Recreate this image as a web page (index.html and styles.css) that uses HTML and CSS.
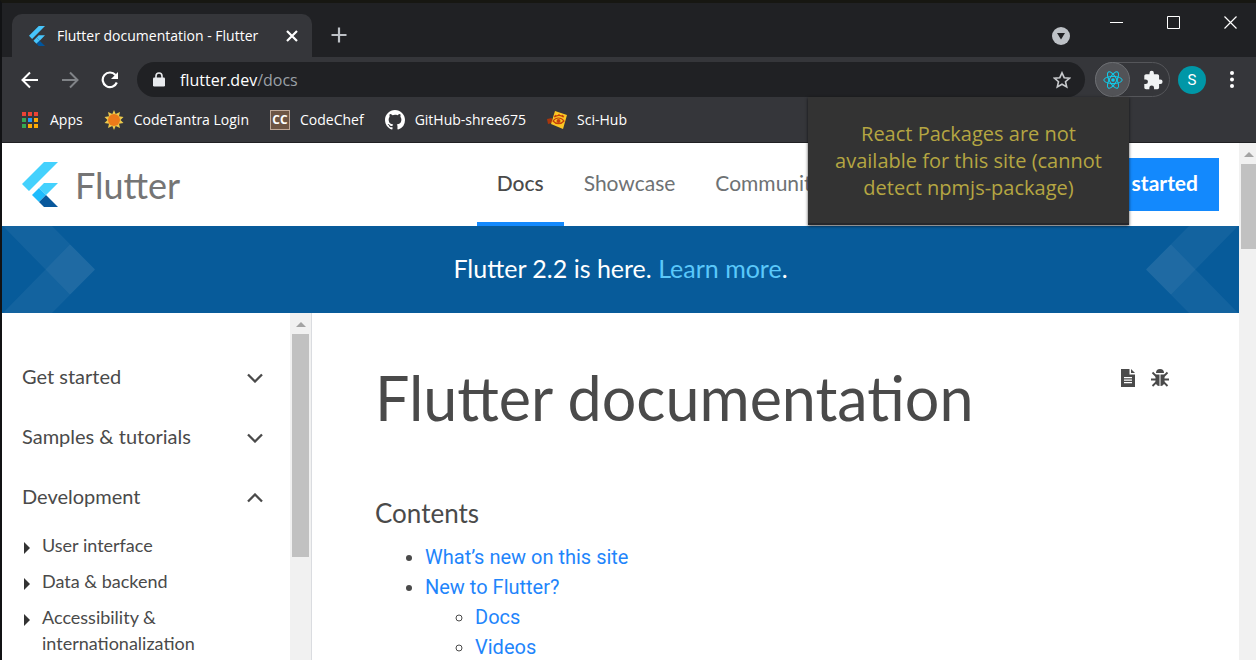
FILE: index.html
```html
<!DOCTYPE html>
<html lang="en">
<head>
<meta charset="utf-8">
<title>Flutter documentation - Flutter</title>
<link rel="stylesheet" href="styles.css">
</head>
<body>
<div class="window">
  <div class="tabstrip">
    <div class="tab">
      <svg class="tab-logo" width="18" height="20" viewBox="0 0 36 45"><path fill="#47c5fb" d="M22 0h14L7 29 0 22zM22 21h14L24 33l-7-7z"/><path fill="#47c5fb" d="M10 33l7-7 7 7-7 7z"/><path fill="#00569e" d="M17 40l7-7 12 12H22z"/></svg>
      <span class="tab-title">Flutter documentation - Flutter</span>
      <button class="plain" aria-label="Close tab"><svg width="12" height="12" viewBox="0 0 12 12"><path d="M1 1l10 10M11 1L1 11" stroke="#fff" stroke-width="2.2"/></svg></button>
    </div>
    <button class="plain new-tab" aria-label="New tab"><svg width="16" height="16" viewBox="0 0 16 16"><path d="M8 .5v15M.5 8h15" stroke="#bdc1c6" stroke-width="2.2"/></svg></button>
    <div class="window-controls">
      <button class="plain tab-search" aria-label="Search tabs"><svg width="18" height="18" viewBox="0 0 18 18"><circle cx="9" cy="9" r="9" fill="#bdc1c6"/><path d="M5 6h8L9 12.500z" fill="#202124"/></svg></button>
      <button class="plain" aria-label="Minimize"><svg width="13" height="13" viewBox="0 0 13 13"><path d="M0 6.500h13" stroke="#fff"/></svg></button>
      <button class="plain" aria-label="Maximize"><svg width="13" height="13" viewBox="0 0 13 13"><path d="M.5.5h12v12H.5z" fill="none" stroke="#fff"/></svg></button>
      <button class="plain" aria-label="Close"><svg width="13" height="13" viewBox="0 0 13 13"><path d="M.5.5l12 12M12.500.5l-12 12" stroke="#fff" stroke-width="1.200"/></svg></button>
    </div>
  </div>

  <div class="toolbar">
    <div class="nav-buttons">
      <button class="plain" aria-label="Back"><svg width="18" height="18" viewBox="0 0 18 18"><path d="M17 9H2M9 1.500L1.500 9 9 16.500" fill="none" stroke="#fff" stroke-width="2"/></svg></button>
      <button class="plain" aria-label="Forward"><svg width="18" height="18" viewBox="0 0 18 18"><path d="M1 9h15M9 1.500L16.500 9 9 16.500" fill="none" stroke="#808387" stroke-width="2"/></svg></button>
      <button class="plain" aria-label="Reload"><svg width="18" height="18" viewBox="0 0 18 18"><path d="M15.800 11.500A7.300 7.300 0 1 1 14.500 4" fill="none" stroke="#fff" stroke-width="2.200"/><path d="M17 1v7h-7z" fill="#fff"/></svg></button>
    </div>
    <div class="omnibox">
      <svg width="12" height="15" viewBox="0 0 12 15"><path d="M3 6V4a3 3 0 0 1 6 0v2" fill="none" stroke="#e8eaed" stroke-width="1.600"/><rect x="0" y="5.500" width="12" height="9" rx="1.300" fill="#e8eaed"/></svg>
      <div class="url">flutter.dev<span class="url-path">/docs</span></div>
      <button class="plain" aria-label="Bookmark this page"><svg width="18" height="18" viewBox="0 0 18 18"><path d="M9 1.800l2.200 4.900 5.300.5-4 3.500 1.200 5.200L9 13.200l-4.700 2.700 1.200-5.200-4-3.500 5.300-.5z" fill="none" stroke="#c8cacd" stroke-width="1.600"/></svg></button>
    </div>
    <div class="extensions">
      <button class="plain react" aria-label="React Packages"><svg width="20" height="20" viewBox="0 0 20 20"><g fill="none" stroke="#10cdec"><ellipse cx="10" cy="10" rx="9.200" ry="3.600"/><ellipse cx="10" cy="10" rx="9.200" ry="3.600" transform="rotate(60 10 10)"/><ellipse cx="10" cy="10" rx="9.200" ry="3.600" transform="rotate(120 10 10)"/></g><circle cx="10" cy="10" r="1.800" fill="#10cdec"/></svg></button>
      <button class="plain puzzle" aria-label="Extensions"><svg width="20" height="20" viewBox="1 0 22 23"><path fill="#f1f3f4" d="M20.500 11H19V7c0-1.100-.9-2-2-2h-4V3.500a2.500 2.500 0 0 0-5 0V5H4c-1.100 0-2 .9-2 2v3.800h1.500a2.700 2.700 0 0 1 0 5.400H2V20c0 1.100.9 2 2 2h3.800v-1.500a2.700 2.700 0 0 1 5.400 0V22H17c1.100 0 2-.9 2-2v-4h1.500a2.500 2.500 0 0 0 0-5z"/></svg></button>
      <div class="popup" role="tooltip">React Packages are not available for this site (cannot detect npmjs-package)</div>
    </div>
    <button class="plain avatar" aria-label="Profile">S</button>
    <button class="plain menu" aria-label="Menu"><svg width="4" height="17" viewBox="0 0 4 17"><g fill="#fff"><circle cx="2" cy="2" r="2"/><circle cx="2" cy="8.500" r="2"/><circle cx="2" cy="15" r="2"/></g></svg></button>
  </div>

  <nav class="bookmarks" aria-label="Bookmarks">
    <a href="#"><svg width="20" height="20" viewBox="0 0 20 20"><path fill="#ea4335" d="M2 2h4v4H2zM8 2h4v4H8zM14 2h4v4h-4z"/><path fill="#34a853" d="M2 8h4v4H2zM2 14h4v4H2z"/><path fill="#2196f3" d="M8 8h4v4H8z"/><path fill="#fbaa05" d="M14 8h4v4h-4zM8 14h4v4H8zM14 14h4v4h-4z"/></svg>Apps</a>
    <a href="#"><svg width="20" height="20" viewBox="0 0 20 20"><path fill="#ecc94b" d="M10 0l1.700 4L16 2l-1 4.200 4.500.8-3 3 3 3-4.500.8 1 4.200-4.300-2L10 20l-1.700-4L4 18l1-4.200L.5 13l3-3-3-3L5 6.200 4 2l4.300 2z"/><circle cx="10" cy="10" r="6" fill="#ec7a1a"/></svg>CodeTantra Login</a>
    <a href="#"><span class="codechef-mark" aria-hidden="true">CC</span>CodeChef</a>
    <a href="#"><svg width="20" height="20" viewBox="0 0 16 16"><path fill="#fff" d="M8 0C3.580 0 0 3.580 0 8c0 3.540 2.290 6.530 5.470 7.590.4.070.55-.17.55-.38 0-.19-.01-.82-.01-1.490-2.010.37-2.530-.49-2.690-.94-.09-.23-.48-.94-.82-1.130-.28-.15-.68-.52-.01-.53.63-.01 1.080.58 1.230.82.72 1.210 1.870.87 2.330.66.07-.52.28-.87.51-1.070-1.780-.2-3.640-.89-3.640-3.950 0-.87.31-1.590.82-2.150-.08-.2-.36-1.020.08-2.120 0 0 .67-.21 2.200.82A7.600 7.600 0 0 1 8 3.870c.68 0 1.360.09 2 .26 1.530-1.040 2.200-.82 2.200-.82.44 1.100.16 1.920.08 2.120.51.56.82 1.270.82 2.150 0 3.070-1.870 3.750-3.650 3.950.29.25.54.73.54 1.480 0 1.070-.01 1.930-.01 2.200 0 .21.15.46.55.38A8 8 0 0 0 16 8c0-4.420-3.580-8-8-8z"/></svg>GitHub-shree675</a>
    <a href="#"><svg width="20" height="20" viewBox="0 0 20 20"><path fill="#a8360c" d="M0 9l5-1v5l-4 1z"/><path fill="#fcc624" d="M8 1l12 4-4 14-12-5z"/><g fill="none" stroke="#c4400c" stroke-width="1.200"><path d="M6 11c3-4 8-4 11 0-3 3.500-8 3.500-11 0z"/><path d="M7 7c3-2 7-2 10 0M8 5l1 2M12 4v2M16 5l-1 2"/></g><circle cx="11.500" cy="11" r="2" fill="#c4400c"/></svg>Sci-Hub</a>
  </nav>

  <div class="viewport">
    <div class="page">
      <header class="site-header">
        <a class="brand" href="#"><svg width="36" height="45" viewBox="0 0 36 45"><path fill="#44d1fd" d="M22 0h14L7 29 0 22zM22 21h14L24 33l-7-7z"/><path fill="#1fbcfd" d="M10 33l7-7 7 7-7 7z"/><path fill="#08589c" d="M17 40l7-7 12 12H22z"/></svg>Flutter</a>
        <nav class="site-nav">
          <a class="active" href="#">Docs</a>
          <a href="#">Showcase</a>
          <a href="#">Community</a>
        </nav>
        <button class="cta">Get started</button>
      </header>

      <div class="banner">
        <svg class="chevrons" width="94" height="87" viewBox="0 0 94 87"><g fill="#fff" fill-opacity=".05"><path d="M1 0h49l43 43.500-25 25z"/><path d="M1 87h49l43-43.500-25-25z"/></g></svg>
        <p>Flutter 2.2 is here. <a href="#">Learn more</a>.</p>
        <svg class="chevrons" width="94" height="87" viewBox="0 0 94 87"><g fill="#fff" fill-opacity=".05"><path d="M93 0H44L1 43.500l25 25z"/><path d="M93 87H44L1 43.500l25-25z"/></g></svg>
      </div>

      <div class="columns">
        <aside class="sidebar">
          <nav class="side-nav">
            <button class="plain section">Get started<svg width="16" height="10" viewBox="0 0 16 10"><path d="M1 1.500l7 7 7-7" fill="none" stroke="#4a4a4a" stroke-width="2.300"/></svg></button>
            <button class="plain section">Samples &amp; tutorials<svg width="16" height="10" viewBox="0 0 16 10"><path d="M1 1.500l7 7 7-7" fill="none" stroke="#4a4a4a" stroke-width="2.300"/></svg></button>
            <button class="plain section" aria-expanded="true">Development<svg width="16" height="10" viewBox="0 0 16 10"><path d="M1 8.500l7-7 7 7" fill="none" stroke="#4a4a4a" stroke-width="2.300"/></svg></button>
            <ul class="sub">
              <li><a href="#">User interface</a></li>
              <li><a href="#">Data &amp; backend</a></li>
              <li><a href="#">Accessibility &amp; internationalization</a></li>
            </ul>
          </nav>
          <div class="scrollbar" aria-hidden="true"><span class="arrow"></span><span class="thumb side-thumb"></span></div>
        </aside>

        <main class="content">
          <div class="title-row">
            <h1>Flutter documentation</h1>
            <div class="page-tools">
              <a href="#" aria-label="View page source"><svg width="14" height="18" viewBox="0 0 14 18"><path fill="#4a4a4a" fill-rule="evenodd" d="M0 0h8.500v5.500H14V18H0zM3 8v1.300h8V8zM3 10.500v1.300h8v-1.300zM3 13v1.300h8V13z"/><path fill="#4a4a4a" d="M10 0l4 4h-4z"/></svg></a>
              <a href="#" aria-label="Report an issue"><svg width="18" height="18" viewBox="0 0 18 18"><path fill="#4a4a4a" d="M5 4a4 4 0 0 1 8 0zM4.500 5.500h4V17C6 17 4.500 15 4.500 12.500zM9.500 5.500h4v7C13.500 15 12 17 9.500 17z"/><path d="M1.500 3.500l4 4M16.500 3.500l-4 4M0 10.500h5M18 10.500h-5M1.500 17l4-4M16.500 17l-4-4" stroke="#4a4a4a" stroke-width="1.800"/></svg></a>
            </div>
          </div>
          <h2>Contents</h2>
          <ul class="toc">
            <li><a href="#">What’s new on this site</a></li>
            <li><a href="#">New to Flutter?</a>
              <ul>
                <li><a href="#">Docs</a></li>
                <li><a href="#">Videos</a></li>
              </ul>
            </li>
          </ul>
        </main>
      </div>
    </div>
    <div class="scrollbar page-scroll" aria-hidden="true"><span class="arrow"></span><span class="thumb page-thumb"></span></div>
  </div>
</div>
</body>
</html>
```
FILE: styles.css
```css
* { box-sizing: border-box; }

body {
  margin: 0;
  font-family: Lato, "Open Sans", sans-serif;
  color: #4a4a4a;
}

a { color: inherit; text-decoration: none; }
svg { display: block; flex: none; }
ul, p, h1, h2 { margin: 0; padding: 0; }

.plain {
  padding: 0;
  border: 0;
  background: none;
  color: inherit;
  font: inherit;
}

.window {
  display: flex;
  flex-direction: column;
  height: 100vh;
  overflow: hidden;
  border-top: 3px solid #171712;
  border-left: 2px solid #111214;
  background: #fff;
}

/* Browser chrome */
.tabstrip, .toolbar, .bookmarks {
  display: flex;
  flex: none;
  align-items: center;
  background: #35363a;
  color: #fff;
  font-family: "Open Sans", sans-serif;
  font-size: 14px;
}

.tabstrip {
  align-items: flex-end;
  height: 54px;
  padding-left: 10px;
  background: #202124;
}

.tab {
  display: flex;
  align-items: center;
  width: 300px;
  height: 43px;
  padding: 0 14px 0 16px;
  border-radius: 10px 10px 0 0;
  background: #35363a;
}

.tab-title { flex: 1; padding-left: 11px; white-space: nowrap; }
.new-tab { margin-left: 19px; padding-bottom: 14px; }

.window-controls {
  display: flex;
  align-items: flex-start;
  align-self: flex-start;
  gap: 44px;
  margin-left: auto;
  padding: 13px 19px 0 0;
}

.tab-search { padding-top: 11px; margin-right: -4px; }

.toolbar { height: 46px; padding: 0 22px 1px 0; }
.nav-buttons { display: flex; gap: 22px; padding: 0 18px 0 19px; }

.omnibox {
  display: flex;
  flex: 1;
  align-items: center;
  height: 35px;
  margin-right: 10px;
  padding: 0 14px 0 16px;
  border-radius: 18px;
  background: #202124;
}

.url { flex: 1; padding-left: 15px; font-size: 16px; }
.url-path { color: #9aa0a6; }

.extensions {
  position: relative;
  display: flex;
  align-items: center;
  width: 75px;
  height: 35px;
  margin-right: 8px;
  border: 1px solid #55565a;
  border-radius: 18px;
}

.react {
  display: grid;
  place-items: center;
  width: 35px;
  height: 35px;
  margin-left: -1px;
  border: 1px solid #6c6e72;
  border-radius: 50%;
  background: #525357;
}

.puzzle { margin-left: 13px; }

.popup {
  position: absolute;
  z-index: 2;
  top: 34px;
  right: 40px;
  width: 321px;
  padding: 23px 25px 22px;
  background: #333;
  border-bottom: 2px solid #26272b;
  box-shadow: 0 1px 3px rgba(0, 0, 0, .7);
  color: #b5a642;
  font-size: 20px;
  line-height: 27px;
  text-align: center;
}

.avatar {
  width: 28px;
  height: 28px;
  border-radius: 50%;
  background: #0097a7;
  font: 15px Roboto, sans-serif;
}

.menu { margin-left: 24px; }

.bookmarks {
  gap: 21px;
  height: 40px;
  padding: 0 18px 6px;
  border-bottom: 1px solid #202124;
}

.bookmarks a { display: flex; align-items: center; gap: 10px; }

.codechef-mark {
  width: 20px;
  height: 20px;
  border: 1px solid #c0a998;
  background: #6d5544;
  font-size: 12px;
  font-weight: 700;
  line-height: 17px;
  text-align: center;
}

/* Page viewport */
.viewport { display: flex; flex: 1; min-height: 0; }
.page { display: flex; flex: 1; flex-direction: column; min-width: 0; }

.scrollbar {
  flex: none;
  padding: 9px 2px 0;
  background: #f1f1f1;
}

.arrow {
  display: block;
  width: 0;
  margin: 0 auto 7px;
  border: 5px solid transparent;
  border-top: 0;
  border-bottom-color: #a3a3a3;
}

.thumb { display: block; background: #c1c1c1; }
.side-thumb { width: 17px; height: 223px; }
.page-scroll { width: 17px; padding-right: 0; }
.page-thumb { height: 85px; }

.site-header {
  display: flex;
  flex: none;
  align-items: center;
  height: 83px;
  padding: 0 20px;
}

.brand {
  display: flex;
  flex: 1;
  align-items: center;
  gap: 17px;
  color: #757575;
  font-size: 36px;
  line-height: 40px;
}

.site-nav {
  display: flex;
  align-self: stretch;
  margin-right: 229px;
  color: #6e7274;
  font-size: 21px;
}

.site-nav a {
  padding: 0 20px;
  border-bottom: 4px solid transparent;
  line-height: 79px;
}

.site-nav .active { border-color: #1389fd; color: #4a4a4a; font-weight: 500; }

.cta {
  height: 53px;
  padding: 0 21px 4px;
  border: 0;
  background: #1389fd;
  color: #fff;
  font: 700 21px Lato, sans-serif;
}

.banner {
  display: flex;
  flex: none;
  align-items: center;
  justify-content: space-between;
  height: 87px;
  background: #075b9a;
  color: #fff;
  font-size: 25px;
}

.banner p { padding-bottom: 4px; }
.banner a { color: #5ac8fa; }

.columns { display: flex; flex: 1; min-height: 0; }

.sidebar {
  display: flex;
  flex: none;
  width: 310px;
  overflow: hidden;
  border-right: 1px solid #dadce0;
}

.side-nav { flex: 1; padding: 33px 27px 0 20px; }

.section {
  display: flex;
  align-items: center;
  justify-content: space-between;
  width: 100%;
  height: 60px;
  font-size: 20px;
}

.section svg { margin-top: 3px; }

.sub {
  display: grid;
  gap: 10px;
  padding-top: 6px;
  font-size: 18px;
  line-height: 26px;
  list-style: none;
}

.sub li { display: flex; }

.sub li::before {
  content: "";
  flex: none;
  align-self: flex-start;
  margin: 10px 12px 0 2px;
  border: 6px solid transparent;
  border-right: 0;
  border-left-color: #333;
}

.content { flex: 1; min-width: 0; overflow: hidden; padding: 47px 70px 0 63px; }

.title-row { display: flex; align-items: flex-start; justify-content: space-between; }
h1 { font-size: 61px; font-weight: 400; line-height: 75px; }
.page-tools { display: flex; gap: 16px; padding-top: 9px; }
h2 { margin: 62px 0 13px; font-size: 26px; font-weight: 400; line-height: 32px; }

.toc, .toc ul { padding-left: 50px; }
.toc { font: 20px/30px Roboto, sans-serif; }
.toc a { color: #1f85fb; }
```
